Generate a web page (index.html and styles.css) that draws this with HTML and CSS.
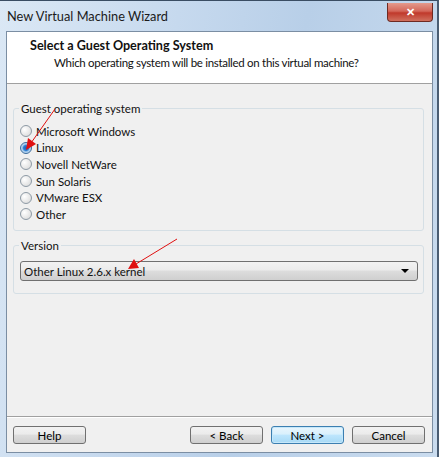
FILE: index.html
```html
<!DOCTYPE html>
<html lang="en">
<head>
    <meta charset="UTF-8">
    <title>New Virtual Machine Wizard</title>
    <link rel="stylesheet" href="styles.css">
</head>
<body>
    <div class="window">
        <div class="titlebar">
            <span class="title">New Virtual Machine Wizard</span>
            <span class="close">&#x2715;</span>
        </div>
        <div class="client">
            <div class="header">
                <div class="heading">Select a Guest Operating System</div>
                <div class="subheading">Which operating system will be installed on this virtual machine?</div>
            </div>
            <div class="content">
                <fieldset class="group os-group">
                    <legend>Guest operating system</legend>
                    <div class="radio"><span class="dot"></span>Microsoft Windows</div>
                    <div class="radio"><span class="dot checked"></span>Linux</div>
                    <div class="radio"><span class="dot"></span>Novell NetWare</div>
                    <div class="radio"><span class="dot"></span>Sun Solaris</div>
                    <div class="radio"><span class="dot"></span>VMware ESX</div>
                    <div class="radio"><span class="dot"></span>Other</div>
                </fieldset>
                <fieldset class="group version-group">
                    <legend>Version</legend>
                    <div class="select">
                        <span>Other Linux 2.6.x kernel</span>
                        <span class="caret"></span>
                    </div>
                </fieldset>
            </div>
            <div class="footer">
                <button class="btn">Help</button>
                <div class="spacer"></div>
                <button class="btn">&lt; Back</button>
                <button class="btn default">Next &gt;</button>
                <button class="btn">Cancel</button>
            </div>
        </div>

        <!-- red annotation arrows drawn over the dialog -->
        <svg class="arrows" width="439" height="457" viewBox="0 0 439 457">
            <line x1="55" y1="108" x2="31" y2="142" stroke="#e01010" stroke-width="1"/>
            <polygon points="26,149 28,137 36,143" fill="#e01010"/>
            <line x1="177" y1="238" x2="136" y2="263" stroke="#e01010" stroke-width="1"/>
            <polygon points="128,268 134,258 139,267" fill="#e01010"/>
        </svg>
    </div>
</body>
</html>
```

FILE: styles.css
```css
html, body {
    margin: 0;
    padding: 0;
}
body {
    width: 439px;
    height: 457px;
    overflow: hidden;
    font-family: Lato, "Open Sans", sans-serif;
    font-size: 11.5px;
    color: #111;
}
.window {
    position: relative;
    width: 439px;
    height: 457px;
    box-sizing: border-box;
    background: linear-gradient(100deg, #dbe8f5 0%, #c6d9ee 35%, #b8cfe8 60%, #cadcef 100%);
    border-top: 1px solid #3a4d63;
    border-right: 2px solid #4a5d73;
    display: flex;
    flex-direction: column;
}
.titlebar {
    height: 30px;
    display: flex;
    align-items: flex-start;
}
.title {
    font-size: 12.8px;
    margin: 7px 0 0 7px;
    color: #1a1a1a;
}
.close {
    margin: 2px 4px 0 auto;
    width: 44px;
    height: 18px;
    border: 1px solid #6e2a22;
    border-top: none;
    border-radius: 0 0 4px 4px;
    background: linear-gradient(#e49a8c 0%, #d4675a 45%, #c0392b 55%, #d0705e 100%);
    color: #fff;
    font-size: 11px;
    font-weight: bold;
    text-align: center;
    line-height: 18px;
}
.client {
    margin: 0 4px 4px 6px;
    flex: 1;
    border: 1px solid #7b8ea3;
    background: #f0f0f0;
    display: flex;
    flex-direction: column;
}
.header {
    height: 52px;
    background: #fff;
    border-bottom: 1px solid #a0a0a0;
    box-sizing: border-box;
    padding: 6px 0 0 23px;
}
.heading {
    font-weight: bold;
    font-size: 12.6px;
}
.subheading {
    margin: 3px 0 0 24px;
    letter-spacing: -0.3px;
}
.content {
    flex: 1;
    padding: 18px 8px 0 6px;
}
.group {
    margin: 0;
    padding: 0 6px 0 6px;
    border: 1px solid #d5dfe5;
    border-radius: 3px;
}
.group legend {
    padding: 0 2px;
    margin-left: -1px;
}
.os-group {
    height: 129px;
    box-sizing: border-box;
    padding-top: 8px;
}
.radio {
    display: flex;
    align-items: center;
    height: 16.6px;
}
.dot {
    width: 10px;
    height: 10px;
    border: 1px solid #8e9aa5;
    border-radius: 50%;
    margin-right: 4px;
    background: radial-gradient(circle at 35% 35%, #ffffff 0%, #e6e6e6 60%, #cfd2d5 100%);
    box-sizing: content-box;
}
.dot.checked {
    background: radial-gradient(circle at 50% 50%, #1a5fb4 0%, #2a7bd0 35%, #a8cdee 55%, #e6eef5 100%);
    border-color: #3c6c9c;
}
.version-group {
    margin-top: 8px;
    height: 55px;
    box-sizing: border-box;
    padding-top: 9px;
}
.select {
    height: 20px;
    box-sizing: border-box;
    border: 1px solid #707070;
    border-radius: 3px;
    background: linear-gradient(#f2f2f2 0%, #ebebeb 45%, #dddddd 50%, #cfcfcf 100%);
    display: flex;
    align-items: center;
    padding: 0 8px 0 3px;
    margin-right: -1px;
}
.caret {
    margin-left: auto;
    width: 0;
    height: 0;
    border-left: 4px solid transparent;
    border-right: 4px solid transparent;
    border-top: 4px solid #000;
}
.footer {
    height: 36px;
    box-sizing: border-box;
    border-top: 1px solid #a0a0a0;
    box-shadow: inset 0 1px 0 #fff;
    display: flex;
    align-items: flex-start;
    padding: 9px 7px 0 6px;
    gap: 8px;
}
.spacer {
    flex: 1;
}
.btn {
    width: 73px;
    height: 18px;
    padding: 0;
    font-family: inherit;
    font-size: 11.5px;
    border: 1px solid #707070;
    border-radius: 3px;
    background: linear-gradient(#f2f2f2 0%, #ebebeb 45%, #dddddd 50%, #cfcfcf 100%);
    color: #000;
}
.btn.default {
    border-color: #3c7fb1;
    background: linear-gradient(#eaf6fd 0%, #d9f0fc 45%, #bee6fd 50%, #a7d9f5 100%);
    box-shadow: inset 0 0 0 1px #c6e8fa;
}
.arrows {
    position: absolute;
    left: 0;
    top: 0;
    pointer-events: none;
}
```
